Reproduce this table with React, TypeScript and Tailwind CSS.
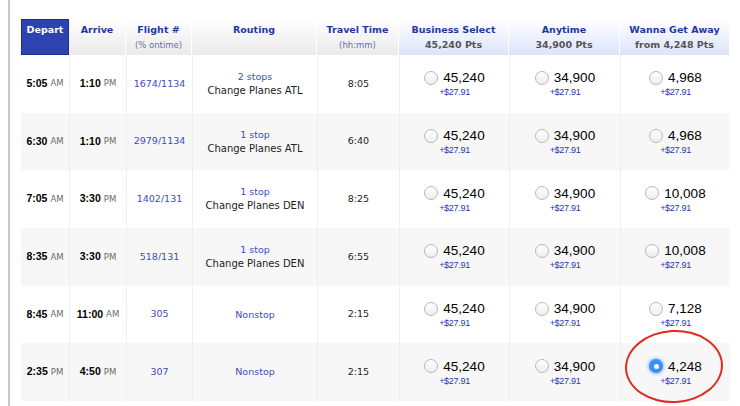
const flights = [
  { dep: "5:05", depM: "AM", arr: "1:10", arrM: "PM", num: "1674/1134", stops: "2 stops", change: "Change Planes ATL", time: "8:05", wga: "4,968" },
  { dep: "6:30", depM: "AM", arr: "1:10", arrM: "PM", num: "2979/1134", stops: "1 stop", change: "Change Planes ATL", time: "6:40", wga: "4,968" },
  { dep: "7:05", depM: "AM", arr: "3:30", arrM: "PM", num: "1402/131", stops: "1 stop", change: "Change Planes DEN", time: "8:25", wga: "10,008" },
  { dep: "8:35", depM: "AM", arr: "3:30", arrM: "PM", num: "518/131", stops: "1 stop", change: "Change Planes DEN", time: "6:55", wga: "10,008" },
  { dep: "8:45", depM: "AM", arr: "11:00", arrM: "AM", num: "305", stops: "Nonstop", change: "", time: "2:15", wga: "7,128" },
  { dep: "2:35", depM: "PM", arr: "4:50", arrM: "PM", num: "307", stops: "Nonstop", change: "", time: "2:15", wga: "4,248", picked: true },
];

const cols = "grid grid-cols-[48px_57px_66px_125px_82px_110px_111px_110px]";
const verdana = "font-['DejaVu_Sans',Verdana,sans-serif]";
const helv = "font-['Liberation_Sans',Arial,sans-serif]";

function Radio({ on }: { on?: boolean }) {
  if (on) {
    return (
      <span className="flex h-[14px] w-[14px] items-center justify-center rounded-full bg-[#3d8ff2] shadow-[0_0_3px_1px_rgba(80,150,240,0.6)]">
        <span className="h-[5px] w-[5px] rounded-full bg-white" />
      </span>
    );
  }
  return <span className="h-[14px] w-[14px] rounded-full border border-[#b8b8b8] bg-gradient-to-b from-white to-[#eeeeee]" />;
}

function Price({ pts, on }: { pts: string; on?: boolean }) {
  return (
    <div className="flex flex-col items-center justify-center border-l border-[#efefef]">
      <div className="flex items-center gap-[5px]">
        <Radio on={on} />
        <span className={`${helv} text-[13.5px] leading-[15px] text-black`}>{pts}</span>
      </div>
      <span className={`${helv} mt-[2px] text-[9px] leading-[10px] tracking-[-0.3px] text-[#2536b0]`}>+$27.91</span>
    </div>
  );
}

function Time({ t, m }: { t: string; m: string }) {
  return (
    <div className="flex items-center justify-center border-l border-[#efefef] first:border-l-0">
      <span className={`${helv} text-[10.5px] font-bold text-black`}>{t}</span>
      <span className={`${verdana} ml-[3px] text-[8.5px] text-[#6a6a6a]`}>{m}</span>
    </div>
  );
}

function Head({ title, sub, blue, bold }: { title: string; sub?: string; blue?: boolean; bold?: boolean }) {
  return (
    <div
      className={`flex flex-col items-center border-r border-white pt-[4px] ${
        blue ? "bg-gradient-to-b from-white to-[#dde4fa]" : "bg-gradient-to-b from-white to-[#eaeaea]"
      }`}
    >
      <span className={`${verdana} text-[9.5px] font-bold leading-[14px] text-[#1f37a6]`}>{title}</span>
      {sub && (
        <span
          className={`${verdana} mt-[2px] leading-[12px] ${
            bold ? "text-[9.5px] font-bold text-[#555]" : "text-[8.5px] text-[#6a6f9e]"
          }`}
        >
          {sub}
        </span>
      )}
    </div>
  );
}

export default function App() {
  return (
    <div className="relative flex h-[406px] w-[740px] overflow-hidden bg-white">
      <div className="ml-[8px] w-[2px] bg-[#c8c8c8]" />
      <div className="ml-[11px] mt-[19px] flex w-[709px] flex-col">
        <div className={`${cols} h-[36px]`}>
          <div className="flex justify-center border border-[#1c2e8e] bg-[#2c43b0] pt-[3px]">
            <span className={`${verdana} text-[9.5px] font-bold leading-[14px] text-white`}>Depart</span>
          </div>
          <Head title="Arrive" />
          <Head title="Flight #" sub="(% ontime)" />
          <Head title="Routing" />
          <Head title="Travel Time" sub="(hh:mm)" />
          <Head title="Business Select" sub="45,240 Pts" blue bold />
          <Head title="Anytime" sub="34,900 Pts" blue bold />
          <Head title="Wanna Get Away" sub="from 4,248 Pts" blue bold />
        </div>

        {flights.map((f, i) => (
          <div key={i} className={`${cols} h-[57.7px] ${i % 2 ? "bg-[#f7f7f7]" : "bg-white"}`}>
            <Time t={f.dep} m={f.depM} />
            <Time t={f.arr} m={f.arrM} />
            <div className={`${verdana} flex items-center justify-center border-l border-[#efefef] text-[9.5px] text-[#3a4ec0]`}>
              {f.num}
            </div>
            <div className={`${verdana} flex flex-col items-center justify-center border-l border-[#efefef] leading-[14px]`}>
              <span className="text-[9.5px] text-[#3a4ec0]">{f.stops}</span>
              {f.change && <span className="text-[10px] text-[#222]">{f.change}</span>}
            </div>
            <div className={`${verdana} flex items-center justify-center border-l border-[#efefef] text-[9.5px] text-[#222]`}>
              {f.time}
            </div>
            <Price pts="45,240" />
            <Price pts="34,900" />
            <Price pts={f.wga} on={f.picked} />
          </div>
        ))}
      </div>

      <div className="absolute left-[625px] top-[330px] h-[73px] w-[98px] -rotate-3 rounded-[50%] border-[2.5px] border-[#e42a1f]" />
    </div>
  );
}
